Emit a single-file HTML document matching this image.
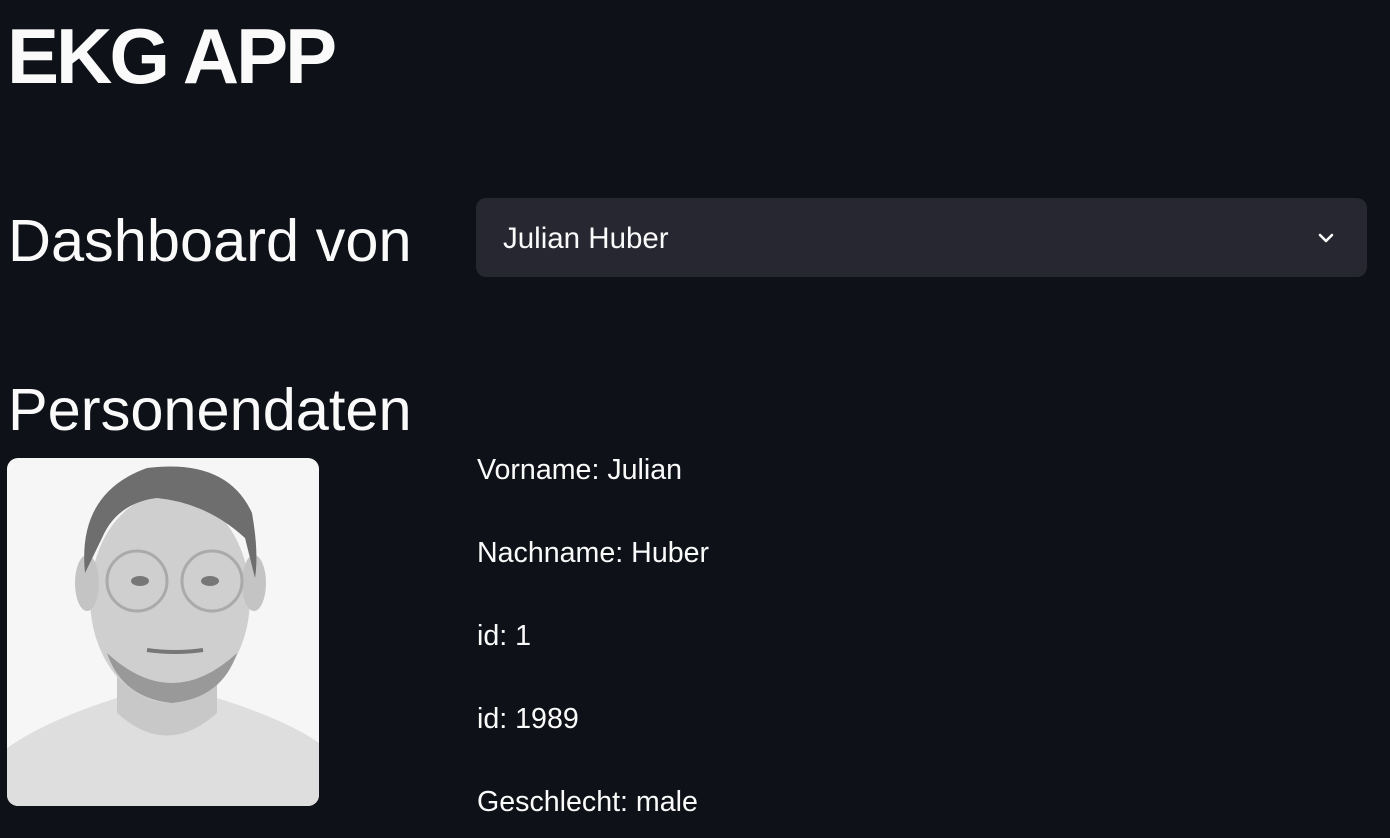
<!DOCTYPE html>
<html><head><meta charset="utf-8"><style>
*{margin:0;padding:0;box-sizing:border-box}
body{width:1390px;height:838px;background:#0e1117;color:#fafafa;font-family:"Liberation Sans",sans-serif;position:relative;overflow:hidden}
.a{position:absolute;white-space:nowrap}
h1{position:absolute;left:7px;top:17px;font-size:78px;font-weight:bold;letter-spacing:-3px;line-height:1}
.h2{font-size:59.5px;line-height:1}
.sel{position:absolute;left:476px;top:198px;width:891px;height:79px;background:#262730;border-radius:10px}
.p{font-size:28.6px;line-height:1;left:477px}
</style></head><body>
<h1>EKG APP</h1>
<div class="a h2" style="left:8px;top:211px">Dashboard von</div>
<div class="sel"><div class="a" style="left:27px;top:24px;font-size:29.5px">Julian Huber</div>
<svg class="a" style="left:840px;top:30px" width="20" height="20" viewBox="0 0 20 20"><path d="M4 7 L10 13 L16 7" stroke="#fafafa" stroke-width="2.6" fill="none" stroke-linecap="round" stroke-linejoin="round"/></svg></div>
<div class="a h2" style="left:8px;top:380px">Personendaten</div>
<svg class="a" style="left:7px;top:458px" width="312" height="348" viewBox="0 0 312 348">
<defs><clipPath id="c"><rect width="312" height="348" rx="11"/></clipPath></defs>
<g clip-path="url(#c)">
<rect width="312" height="348" fill="#f6f6f6"/>
<path d="M0 290 Q40 262 110 240 L210 240 Q280 262 312 285 L312 348 L0 348Z" fill="#dedede"/>
<path d="M110 200 L110 255 Q160 300 210 255 L210 200Z" fill="#c8c8c8"/>
<ellipse cx="163" cy="140" rx="80" ry="105" fill="#cfcfcf"/>
<ellipse cx="80" cy="125" rx="12" ry="28" fill="#c4c4c4"/>
<ellipse cx="247" cy="125" rx="12" ry="28" fill="#c4c4c4"/>
<path d="M78 115 Q70 35 140 10 Q220 0 245 55 Q252 95 248 120 L238 80 Q200 45 150 40 Q110 45 95 80 Z" fill="#6e6e6e"/>
<circle cx="130" cy="123" r="30" fill="none" stroke="#aaa" stroke-width="3"/>
<circle cx="205" cy="123" r="30" fill="none" stroke="#aaa" stroke-width="3"/>
<ellipse cx="133" cy="123" rx="9" ry="5" fill="#777"/>
<ellipse cx="203" cy="123" rx="9" ry="5" fill="#777"/>
<path d="M100 195 Q165 255 230 195 Q215 240 165 245 Q115 240 100 195Z" fill="#999"/>
<path d="M140 192 Q168 196 196 192" stroke="#777" stroke-width="4" fill="none"/>
</g></svg>
<div class="a p" style="top:456px">Vorname: Julian</div>
<div class="a p" style="top:539px">Nachname: Huber</div>
<div class="a p" style="top:622px">id: 1</div>
<div class="a p" style="top:705px">id: 1989</div>
<div class="a p" style="top:788px">Geschlecht: male</div>
</body></html>
